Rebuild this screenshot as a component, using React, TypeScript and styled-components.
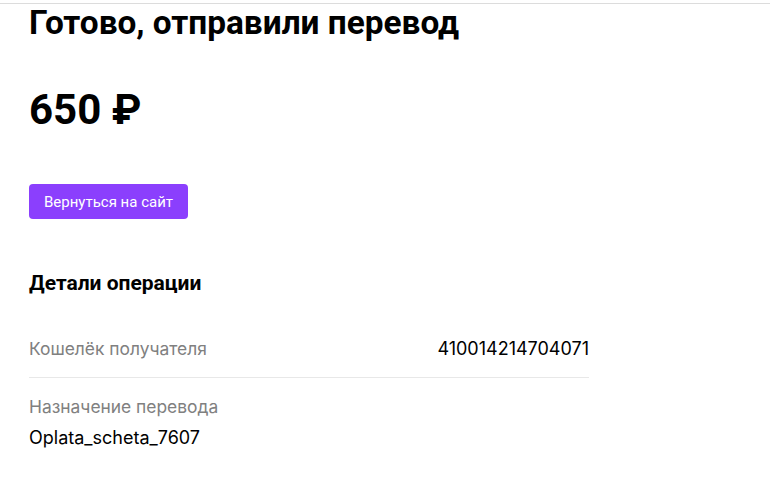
import styled, { createGlobalStyle } from 'styled-components'

const GlobalStyle = createGlobalStyle`
  html, body {
    margin: 0;
    padding: 0;
    background: #fff;
  }
  body {
    font-family: Inter, 'Noto Sans', sans-serif;
    color: #000;
  }
`

const TopBar = styled.div`
  height: 3px;
  border-bottom: 1px solid #dcdcdc;
`

const Page = styled.main`
  width: 560px;
  padding-left: 29px;
  display: flex;
  flex-direction: column;
  align-items: flex-start;
`

const Title = styled.h1`
  margin: 0;
  font-family: Roboto, Inter, sans-serif;
  font-size: 33.4px;
  line-height: 38px;
  font-weight: 700;
`

const Amount = styled.div`
  margin-top: 43px;
  font-family: Roboto, Inter, sans-serif;
  font-size: 42px;
  line-height: 50px;
  font-weight: 700;
`

const BackButton = styled.button`
  margin-top: 49px;
  height: 35px;
  width: 159px;
  padding: 0;
  border: none;
  border-radius: 4px;
  background: #8b3ffd;
  color: #fff;
  font-family: Roboto, sans-serif;
  font-size: 15px;
  cursor: pointer;
`

const SectionTitle = styled.h2`
  margin: 52px 0 0;
  font-family: Roboto, Inter, sans-serif;
  font-size: 21px;
  line-height: 24px;
  font-weight: 700;
`

const DetailsList = styled.div`
  margin-top: 43px;
  width: 100%;
  display: flex;
  flex-direction: column;
`

const DetailRow = styled.div<{ $inline: boolean; $last: boolean }>`
  display: flex;
  flex-direction: ${(p) => (p.$inline ? 'row' : 'column')};
  justify-content: space-between;
  align-items: ${(p) => (p.$inline ? 'baseline' : 'flex-start')};
  gap: ${(p) => (p.$inline ? '0' : '9px')};
  padding: ${(p) => (p.$last ? '18px 0 0' : '0 0 17px')};
  border-bottom: ${(p) => (p.$last ? 'none' : '1px solid #e8e8e8')};
`

const DetailLabel = styled.span`
  font-size: 17.4px;
  line-height: 22px;
  color: #808080;
`

const DetailValue = styled.span`
  font-size: 18px;
  line-height: 22px;
  color: #000;
`

const details = [
  { label: 'Кошелёк получателя', value: '410014214704071', inline: true },
  { label: 'Назначение перевода', value: 'Oplata_scheta_7607', inline: false }
]

export default function App() {
  return (
    <>
      <GlobalStyle />
      <TopBar />
      <Page>
        <Title>Готово, отправили перевод</Title>
        <Amount>650 ₽</Amount>
        <BackButton type='button'>Вернуться на сайт</BackButton>
        <SectionTitle>Детали операции</SectionTitle>
        <DetailsList>
          {details.map((item, i) => (
            <DetailRow key={i} $inline={item.inline} $last={i === details.length - 1}>
              <DetailLabel>{item.label}</DetailLabel>
              <DetailValue>{item.value}</DetailValue>
            </DetailRow>
          ))}
        </DetailsList>
      </Page>
    </>
  )
}
